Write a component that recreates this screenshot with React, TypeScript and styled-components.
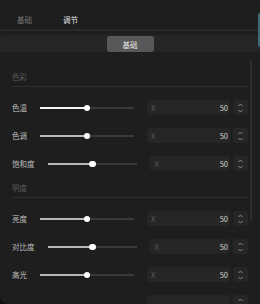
import React from 'react';
import styled, { createGlobalStyle } from 'styled-components';

const GlobalStyle = createGlobalStyle`
    body {
        margin: 0;
        background: #111111;
        font-family: 'Noto Sans CJK SC', 'Noto Sans', sans-serif;
    }
`;

type SliderRowProps = { label: string; value: number; bright?: boolean };

const colourRows: SliderRowProps[] = [
    { label: '色温', value: 50, bright: true },
    { label: '色调', value: 50 },
    { label: '饱和度', value: 50 },
];

const lightRows: SliderRowProps[] = [
    { label: '亮度', value: 50 },
    { label: '对比度', value: 50 },
    { label: '高光', value: 50 },
];

const Spinner: React.FC = () => (
    <SpinBox>
        <svg width="7" height="13" viewBox="0 0 7 13">
            <polyline points="1.5,5 3.5,3 5.5,5" fill="none" stroke="#8c8c8c" strokeWidth="1" />
            <polyline points="1.5,9 3.5,11 5.5,9" fill="none" stroke="#8c8c8c" strokeWidth="1" />
        </svg>
    </SpinBox>
);

const NumberField: React.FC<{ value?: number }> = ({ value }) => (
    <>
        <Field>
            {value !== undefined ? (
                <>
                    <FieldPrefix>X</FieldPrefix>
                    <FieldValue>{value}</FieldValue>
                </>
            ) : null}
        </Field>
        <Spinner />
    </>
);

const SliderRow: React.FC<SliderRowProps> = ({ label, value, bright }) => (
    <Row>
        <RowLabel>{label}</RowLabel>
        <Slider>
            <Track />
            <Fill $bright={bright} style={{ width: `${value}%` }} />
            <Thumb style={{ left: `${value}%` }} />
        </Slider>
        <NumberField value={value} />
    </Row>
);

export default function App() {
    return (
        <>
            <GlobalStyle />
            <Panel>
                <TabBar>
                    <Tab>基础</Tab>
                    <Tab $active>调节</Tab>
                </TabBar>
                <TabDivider />
                <SubBar>
                    <SubButton>基础</SubButton>
                </SubBar>
                <Content>
                    <SectionHeader>色彩</SectionHeader>
                    <Separator />
                    <Rows>
                        {colourRows.map(row => (
                            <SliderRow {...row} key={row.label} />
                        ))}
                    </Rows>
                    <SectionHeader>明度</SectionHeader>
                    <Separator />
                    <Rows>
                        {lightRows.map(row => (
                            <SliderRow {...row} key={row.label} />
                        ))}
                        <Row>
                            <RowLabel />
                            <Spacer />
                            <NumberField />
                        </Row>
                    </Rows>
                </Content>
                <ScrollThumb />
                <EdgeTab />
            </Panel>
        </>
    );
}

const Panel = styled.div`
    position: relative;
    width: 260px;
    height: 304px;
    overflow: hidden;
    background: #1e1e1e;
    border-bottom-left-radius: 8px;
`;

const TabBar = styled.div`
    display: flex;
    gap: 31px;
    height: 29px;
    box-sizing: border-box;
    padding: 16px 0 0 17px;
`;

const Tab = styled.div<{ $active?: boolean }>`
    font-size: 7.5px;
    line-height: 8px;
    color: ${p => (p.$active ? '#e8e8e8' : '#7a7a7a')};
`;

const TabDivider = styled.div`
    height: 2px;
    background: #2a2a2a;
`;

const SubBar = styled.div`
    margin-top: 4px;
    height: 17px;
    background: #262626;
    border-radius: 4px 0 0 4px;
    display: flex;
    justify-content: center;
    align-items: flex-end;
`;

const SubButton = styled.div`
    width: 47px;
    height: 16px;
    border-radius: 3px;
    background: #585858;
    color: #e6e6e6;
    font-size: 7.5px;
    display: flex;
    align-items: center;
    justify-content: center;
`;

const Content = styled.div`
    display: flex;
    flex-direction: column;
    padding: 0 12px;
`;

const SectionHeader = styled.div`
    flex-shrink: 0;
    margin-top: 20px;
    font-size: 7.5px;
    line-height: 10px;
    color: #5c5c5c;
    &:not(:first-child) {
        margin-top: 12px;
    }
`;

const Separator = styled.div`
    flex-shrink: 0;
    margin-top: 4px;
    height: 1px;
    background: #2e2e2e;
`;

const Rows = styled.div`
    display: flex;
    flex-direction: column;
    gap: 13px;
    margin-top: 13px;
`;

const Row = styled.div`
    display: flex;
    align-items: center;
    height: 15px;
    flex-shrink: 0;
`;

const RowLabel = styled.div`
    font-size: 7.5px;
    color: #bdbdbd;
    white-space: nowrap;
    min-width: 15px;
`;

const Slider = styled.div`
    position: relative;
    flex: 11 1 0;
    margin-left: 13px;
    height: 15px;
`;

const Spacer = styled.div`
    flex: 11 1 0;
    margin-left: 13px;
`;

const Track = styled.div`
    position: absolute;
    left: 0;
    right: 0;
    top: 7px;
    height: 1.5px;
    background: #3a3a3a;
`;

const Fill = styled.div<{ $bright?: boolean }>`
    position: absolute;
    left: 0;
    top: 7px;
    height: 1.5px;
    background: ${p => (p.$bright ? '#f2f2f2' : '#b8b8b8')};
`;

const Thumb = styled.div`
    position: absolute;
    top: 4.5px;
    width: 6.5px;
    height: 6.5px;
    margin-left: -3.25px;
    border-radius: 50%;
    background: #ffffff;
`;

const Field = styled.div`
    flex: 9 1 0;
    margin-left: 13px;
    height: 15px;
    box-sizing: border-box;
    padding: 0 2px 0 4px;
    border-radius: 3px;
    background: #262626;
    display: flex;
    align-items: center;
    justify-content: space-between;
    font-size: 7.5px;
`;

const FieldPrefix = styled.span`
    color: #585858;
`;

const FieldValue = styled.span`
    color: #d4d4d4;
`;

const SpinBox = styled.div`
    margin-left: 3px;
    width: 15px;
    height: 15px;
    border-radius: 3px;
    background: #262626;
    display: flex;
    align-items: center;
    justify-content: center;
`;

const ScrollThumb = styled.div`
    position: absolute;
    left: 250px;
    top: 60px;
    width: 2px;
    height: 162px;
    background: #2c2c2c;
`;

const EdgeTab = styled.div`
    position: absolute;
    left: 258px;
    top: 13px;
    width: 4px;
    height: 34px;
    border-radius: 2px;
    background: #3e6a78;
`;
